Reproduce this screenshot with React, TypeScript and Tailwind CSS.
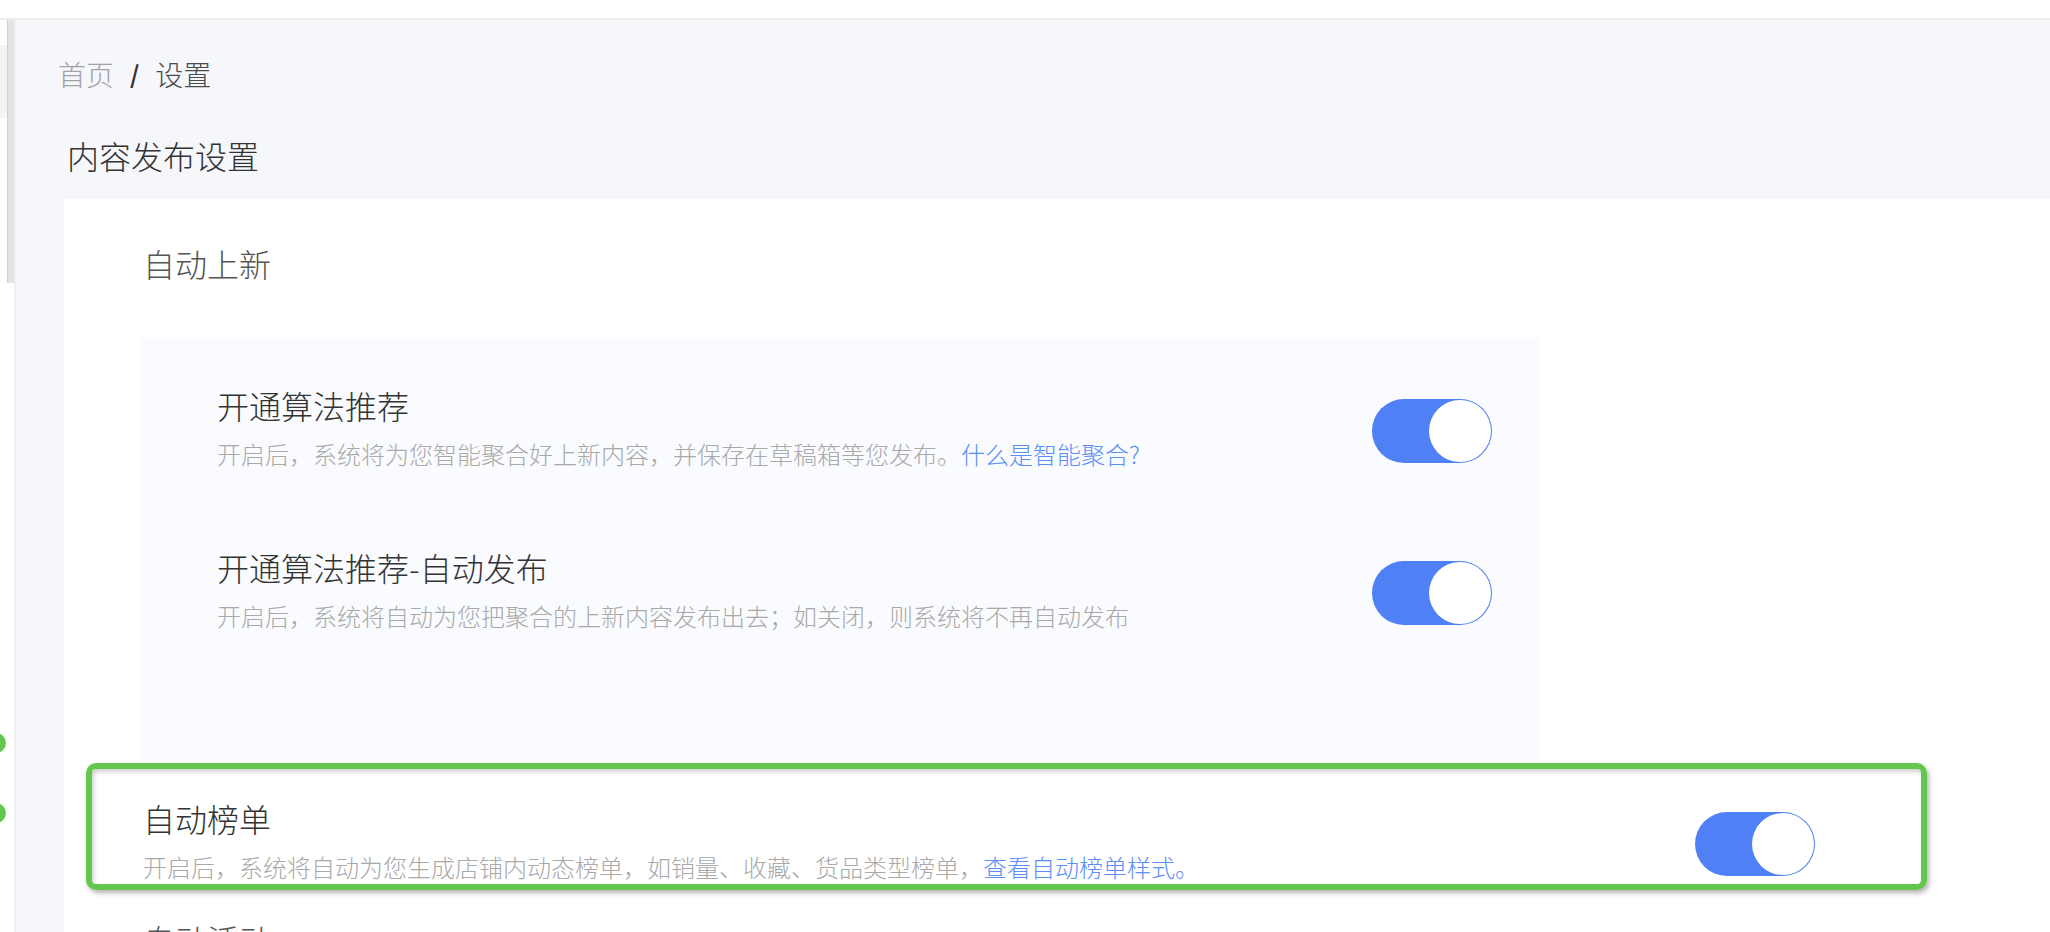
import * as React from "react";

type SettingRowProps = {
    title: string;
    desc: string;
    link?: string;
};

function Toggle() {
    return (
        <div className="mt-[8px] flex h-[64px] w-[120px] shrink-0 items-center justify-end rounded-full bg-[#4f80f6] p-[1px]">
            <div className="h-[62px] w-[62px] rounded-full bg-white" />
        </div>
    );
}

function SettingRow({ title, desc, link }: SettingRowProps) {
    return (
        <div className="flex items-center justify-between">
            <div className="flex flex-col gap-[10px]">
                <div className="text-[32px] leading-[44px] font-light text-[#333]">{title}</div>
                <div className="text-[24px] leading-[34px] font-light text-[#a9a9a9]">
                    {desc}
                    {link && <span className="text-[#5b8ef8]">{link}</span>}
                </div>
            </div>
            <Toggle />
        </div>
    );
}

export default function App() {
    return (
        <div className="relative flex h-[932px] w-[2050px] flex-col overflow-hidden bg-white font-['Noto_Sans_CJK_SC','Noto_Sans',sans-serif]">
            <div className="h-[20px] shrink-0 border-b-2 border-[#ececec] bg-white" />

            <div className="flex flex-1">
                {/* left scroll strip */}
                <div className="flex w-[14px] shrink-0">
                    <div className="w-[7px]">
                        <div className="mt-[25px] h-[73px] bg-[#f4f4f4]" />
                    </div>
                    <div className="h-[263px] w-[7px] border-l border-[#d0d0d0] bg-[#e3e3e3]" />
                </div>

                <div className="flex flex-1 flex-col border-l-2 border-[#eef0f4] bg-[#f6f7fb]">
                    {/* breadcrumb */}
                    <div className="flex items-center pt-[34px] pl-[42px] text-[28px] leading-[40px] font-light">
                        <span className="text-[#a3a3a3]">首页</span>
                        <span className="mx-[16px] text-[24px] font-bold text-[#333]">/</span>
                        <span className="text-[#4a4a4a]">设置</span>
                    </div>

                    <h1 className="mt-[39px] pl-[51px] text-[32px] leading-[44px] font-light text-[#333]">
                        内容发布设置
                    </h1>

                    {/* card */}
                    <div className="mt-[22px] ml-[48px] flex flex-1 flex-col bg-white pt-[42px]">
                        <div className="ml-[79px] text-[32px] leading-[44px] font-light text-[#555]">自动上新</div>

                        <div className="mt-[53px] ml-[76px] flex w-[1400px] flex-col gap-[74px] bg-[#f9fbfe] pt-[45px] pr-[48px] pb-[126px] pl-[77px]">
                            <SettingRow
                                title="开通算法推荐"
                                desc="开启后，系统将为您智能聚合好上新内容，并保存在草稿箱等您发布。"
                                link="什么是智能聚合?"
                            />
                            <SettingRow
                                title="开通算法推荐-自动发布"
                                desc="开启后，系统将自动为您把聚合的上新内容发布出去；如关闭，则系统将不再自动发布"
                            />
                        </div>

                        <div className="relative mt-[37px] ml-[79px] w-[1672px]">
                            <SettingRow
                                title="自动榜单"
                                desc="开启后，系统将自动为您生成店铺内动态榜单，如销量、收藏、货品类型榜单，"
                                link="查看自动榜单样式。"
                            />
                            {/* highlight annotation */}
                            <div className="pointer-events-none absolute -top-[33px] -right-[112px] -bottom-[6px] -left-[57px] rounded-[10px] border-[6px] border-[#63c74e] shadow-[2px_3px_5px_rgba(0,0,0,0.3),inset_2px_3px_4px_rgba(0,0,0,0.18)]" />
                        </div>

                        <div className="mt-[33px] ml-[79px] text-[32px] leading-[44px] font-light text-[#555]">自动活动</div>
                    </div>
                </div>
            </div>

            {/* annotation handles at left edge */}
            <div className="absolute top-[733px] -left-[14px] h-[20px] w-[20px] rounded-full border-[6px] border-[#63c74e] bg-white" />
            <div className="absolute top-[803px] -left-[14px] h-[20px] w-[20px] rounded-full border-[6px] border-[#63c74e] bg-white" />
        </div>
    );
}
